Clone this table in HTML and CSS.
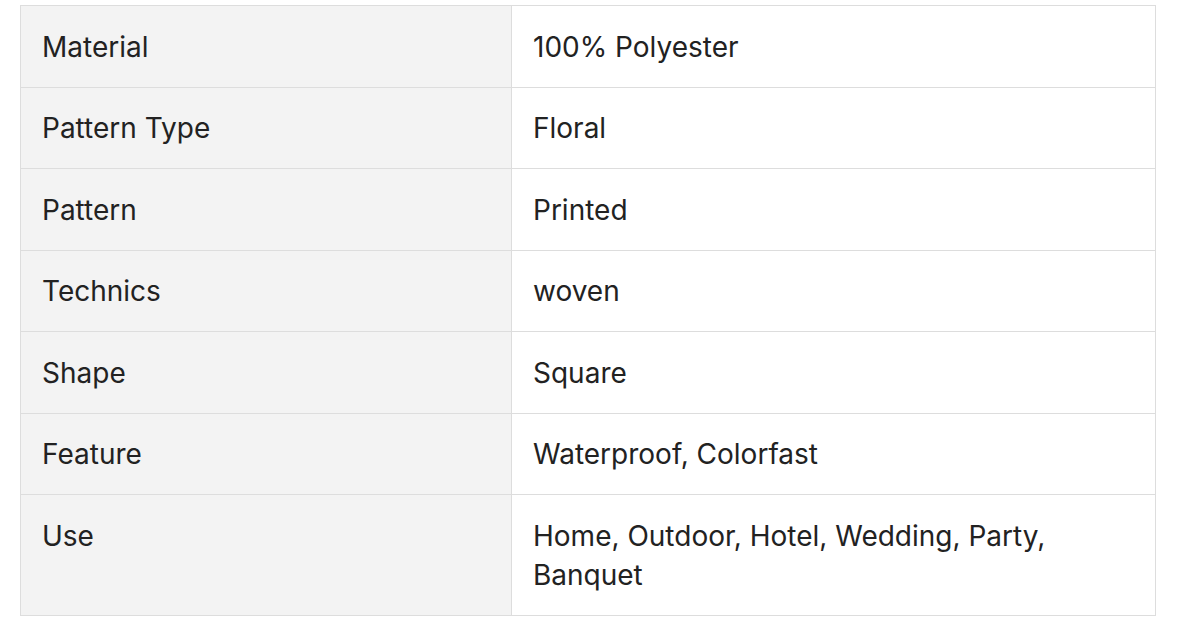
FILE: index.html
```html
<!DOCTYPE html>
<html>
<head>
<meta charset="utf-8">
<link rel="stylesheet" href="styles.css">
</head>
<body>
<table class="specs">
  <tbody>
    <tr><td class="key">Material</td><td class="val">100% Polyester</td></tr>
    <tr><td class="key">Pattern Type</td><td class="val">Floral</td></tr>
    <tr><td class="key">Pattern</td><td class="val">Printed</td></tr>
    <tr><td class="key">Technics</td><td class="val">woven</td></tr>
    <tr><td class="key">Shape</td><td class="val">Square</td></tr>
    <tr><td class="key">Feature</td><td class="val">Waterproof, Colorfast</td></tr>
    <tr><td class="key">Use</td><td class="val">Home, Outdoor, Hotel, Wedding, Party, Banquet</td></tr>
  </tbody>
</table>
</body>
</html>
```
FILE: styles.css
```css
html, body {
  margin: 0;
  background: #ffffff;
}
body {
  padding: 5px 23px 0 20px;
  font-family: Inter, "Noto Sans", sans-serif;
  color: #222222;
}
.specs {
  width: 1136px;
  border-collapse: collapse;
  font-size: 28px;
  line-height: 39px;
}
.specs td {
  border: 1px solid #dddddd;
  padding: 21.5px 21px 20px;
  vertical-align: top;
  text-align: left;
}
.specs .key {
  width: 448px;
  background: #f3f3f3;
}
.specs .val {
  background: #ffffff;
}
```
